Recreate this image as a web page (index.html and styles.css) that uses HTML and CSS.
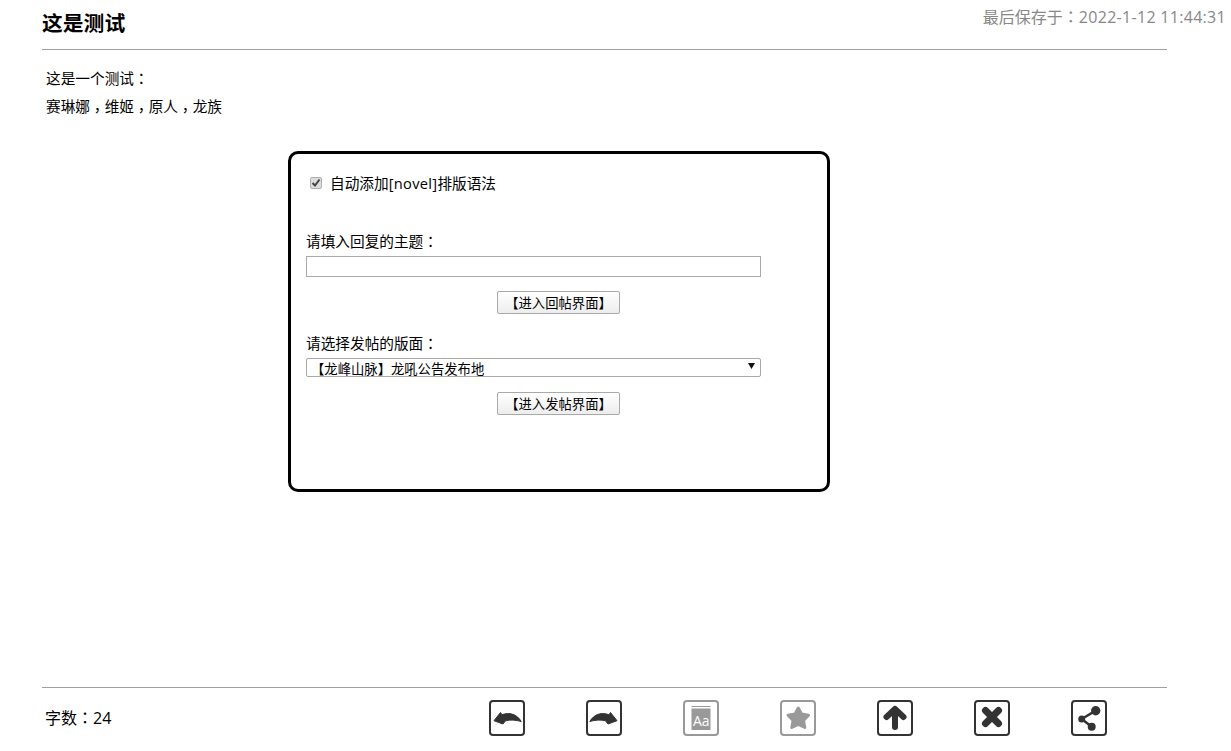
FILE: index.html
```html
<!DOCTYPE html>
<html lang="zh-CN">
<head>
<meta charset="utf-8">
<title>这是测试</title>
<link rel="stylesheet" href="styles.css">
</head>
<body>
<div class="page">
  <div class="saved">最后保存于<span class="punct" lang="zh-TW">：</span><span class="latin">2022-1-12 11:44:31</span></div>
  <header class="head"><h1 class="title">这是测试</h1></header>
  <main class="main">
    <section class="content">
      <p>这是一个测试<span class="punct" lang="zh-TW">：</span></p>
      <p>赛琳娜<span class="punct comma" lang="zh-TW">，</span>维姬<span class="punct comma" lang="zh-TW">，</span>原人<span class="punct comma" lang="zh-TW">，</span>龙族</p>
    </section>
    <section class="panel">
      <label class="auto"><input class="check" type="checkbox" checked><span>自动添加<span class="latin">[novel]</span>排版语法</span></label>
      <div class="field reply">
        <label class="flabel" for="subject">请填入回复的主题<span class="punct" lang="zh-TW">：</span></label>
        <input class="text" id="subject" type="text">
        <button class="btn" type="button">【进入回帖界面】</button>
      </div>
      <div class="field post">
        <label class="flabel" for="board">请选择发帖的版面<span class="punct" lang="zh-TW">：</span></label>
        <select class="select" id="board"><option>【龙峰山脉】龙吼公告发布地</option></select>
        <button class="btn" type="button">【进入发帖界面】</button>
      </div>
    </section>
  </main>
  <footer class="foot">
    <div class="count">字数<span class="punct" lang="zh-TW">：</span>24</div>
    <div class="tools">
      <svg class="tool" viewBox="0 0 36 36"><use href="#frame"/><path class="ink soft" d="M5 20.700 L11.500 12.500 L13 14.800 C20 12 28 14 32.200 21.500 C27 20 21 19.500 16.500 20.800 L14 24 Z"/></svg>
      <svg class="tool" viewBox="0 0 36 36"><use href="#frame"/><path class="ink soft" d="M31 20.700 L24.500 12.500 L23 14.800 C16 12 8 14 3.800 21.500 C9 20 15 19.500 19.500 20.800 L22 24 Z"/></svg>
      <svg class="tool off" viewBox="0 0 36 36"><use href="#frame"/><path class="ink" d="M8.500 6 H27.500 V7 H8.500 Z M8.500 8.500 H27.500 V30 H8.500 Z"/><text class="aa" x="18.200" y="25.500" text-anchor="middle">Aa</text></svg>
      <svg class="tool off" viewBox="0 0 36 36"><use href="#frame"/><path class="ink star" d="M18.300 8 L21.500 14 L28.500 15.200 L23.500 20.500 L24.800 27.500 L18.300 24.500 L11.800 27.500 L13.100 20.500 L8.100 15.200 L15.100 14 Z"/></svg>
      <svg class="tool" viewBox="0 0 36 36"><use href="#frame"/><path class="line" d="M18 27 V11 M9.500 17 L18 9 L26.500 17"/></svg>
      <svg class="tool" viewBox="0 0 36 36"><use href="#frame"/><path class="line thick" d="M11.500 10.500 L24.500 23.500 M24.500 10.500 L11.500 23.500"/></svg>
      <svg class="tool" viewBox="0 0 36 36"><use href="#frame"/><path class="link" d="M10.700 19 L24.700 10.700 M10.700 19 L20.700 26.700"/><circle class="ink" cx="24.700" cy="10.700" r="4.700"/><circle class="ink" cx="10.700" cy="19" r="3.500"/><circle class="ink" cx="20.700" cy="26.700" r="4"/></svg>
    </div>
  </footer>
</div>
<svg class="defs" width="0" height="0" aria-hidden="true"><defs><rect id="frame" x="1" y="1" width="34" height="34" rx="3" fill="none" stroke="currentColor" stroke-width="2"/></defs></svg>
</body>
</html>
```
FILE: styles.css
```css
* { box-sizing: border-box; }
html, body { margin: 0; height: 100%; }
body {
  background: #fff;
  color: #000;
  font-family: "Open Sans", "Noto Sans CJK SC", sans-serif;
  font-size: 14.67px;
  overflow: hidden;
}
.punct { font-family: "Noto Sans CJK TC", sans-serif; }
.comma { vertical-align: -4px; line-height: 0; }
.latin { letter-spacing: 0.3px; }
.page {
  position: relative;
  height: 751px;
  padding: 0 64px 0 42px;
  display: flex;
  flex-direction: column;
}
.saved {
  position: absolute;
  top: 4px;
  right: 5px;
  color: #888;
  font-size: 16px;
  line-height: 24px;
}
.head {
  height: 50px;
  flex: none;
  border-bottom: 1px solid #a0a0a0;
}
.title {
  margin: 0;
  padding-top: 8px;
  font-size: 20.800px;
  line-height: 30px;
  font-weight: bold;
}
.main { flex: 1; }
.content { padding: 13px 0 0 4px; }
.content p { margin: 0; height: 29px; line-height: 29px; }
.panel {
  width: 542px;
  height: 341px;
  margin: 30px 0 0 246px;
  border: 3px solid #000;
  border-radius: 10px;
  padding: 0 15px;
}
.auto {
  display: flex;
  align-items: center;
  gap: 8px;
  height: 24px;
  margin-top: 16px;
  padding-left: 4px;
}
.check {
  appearance: none;
  width: 12px;
  height: 12px;
  margin: 2px 0 0;
  border: 1px solid #b0b0b0;
  border-radius: 2px;
  background: #dcdcdc url("data:image/svg+xml,%3Csvg xmlns='http://www.w3.org/2000/svg' viewBox='0 0 10 10'%3E%3Cpath d='M1.500 5 L4 7.500 L8.500 1.500' fill='none' stroke='%23444' stroke-width='2'/%3E%3C/svg%3E") center / 10px 10px no-repeat;
}
.field { display: flex; flex-direction: column; align-items: flex-start; }
.reply { margin-top: 37px; }
.post { margin-top: 19px; }
.flabel { display: block; line-height: 20px; height: 20px; }
.text {
  display: block;
  width: 455px;
  height: 21px;
  margin-top: 5px;
  border: 1px solid #a9a9a9;
  padding: 0 2px;
  background: #fff;
}
.select {
  appearance: none;
  display: block;
  width: 455px;
  height: 19px;
  margin-top: 5px;
  border: 1px solid #a9a9a9;
  border-radius: 2px;
  background: #fff url("data:image/svg+xml,%3Csvg xmlns='http://www.w3.org/2000/svg' viewBox='0 0 8 6'%3E%3Cpath d='M0 0 H7 L3.500 6 Z' fill='%23111'/%3E%3C/svg%3E") right 4px top 4px / 8px 6px no-repeat;
  font-family: inherit;
  font-size: 13.330px;
  line-height: 17px;
  padding: 2px 0 0 4px;
  color: #000;
}
.btn {
  width: 123px;
  height: 23px;
  padding: 0;
  margin: 14px 0 0 191px;
  border: 1px solid #a9a9a9;
  border-radius: 2px;
  background: linear-gradient(#fff, #ededed);
  font-family: inherit;
  font-size: 13.330px;
  color: #000;
}
.post .btn { margin-top: 15px; }
.foot {
  flex: none;
  height: 64px;
  border-top: 1px solid #a0a0a0;
  position: relative;
  display: flex;
  align-items: flex-start;
}
.count {
  width: 447px;
  padding: 17px 0 0 3px;
  font-size: 16px;
  line-height: 24px;
}
.tools {
  display: flex;
  gap: 61px;
  padding-top: 12px;
}
.tool { width: 36px; height: 36px; color: #333; flex: none; }
.tool.off { color: #999; }
.ink { fill: currentColor; }
.soft { stroke: currentColor; stroke-width: 1; stroke-linejoin: round; }
.star { stroke: currentColor; stroke-width: 3; stroke-linejoin: round; }
.line { fill: none; stroke: currentColor; stroke-width: 6; stroke-linecap: round; stroke-linejoin: round; }
.line.thick { stroke-width: 7; }
.link { fill: none; stroke: currentColor; stroke-width: 2.500; }
.aa { fill: #fff; font-family: "Open Sans", sans-serif; font-size: 14px; }
.defs { position: absolute; }
```
